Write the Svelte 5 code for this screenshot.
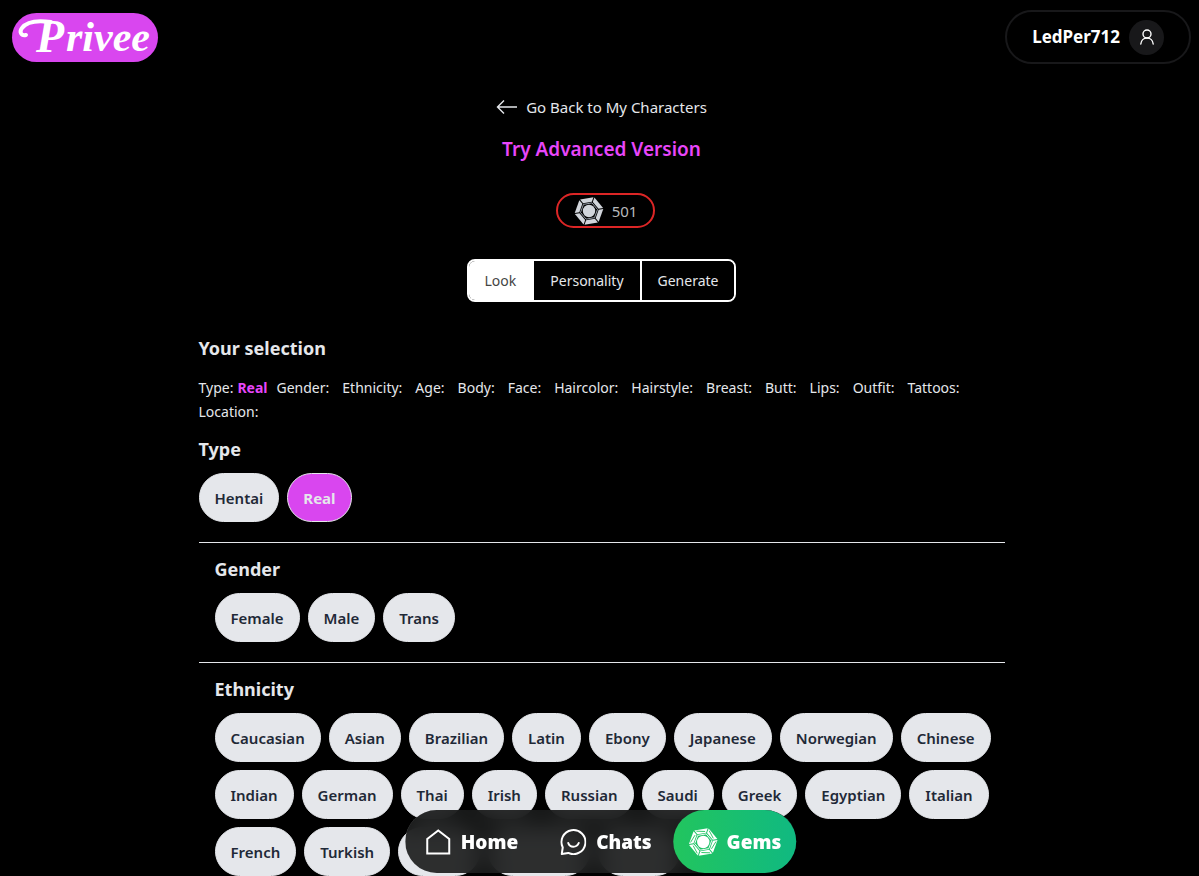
<script>
  const summary = [
    { label: 'Type', value: 'Real' },
    ...['Gender', 'Ethnicity', 'Age', 'Body', 'Face', 'Haircolor', 'Hairstyle', 'Breast', 'Butt', 'Lips', 'Outfit', 'Tattoos', 'Location'].map((label) => ({ label, value: '' }))
  ];
  const tabs = ['Look', 'Personality', 'Generate'];
  const sections = [
    { title: 'Type', options: ['Hentai', 'Real'] },
    { title: 'Gender', options: ['Female', 'Male', 'Trans'] },
    {
      title: 'Ethnicity',
      options: ['Caucasian', 'Asian', 'Brazilian', 'Latin', 'Ebony', 'Japanese', 'Norwegian', 'Chinese', 'Indian', 'German', 'Thai', 'Irish', 'Russian', 'Saudi', 'Greek', 'Egyptian', 'Italian', 'French', 'Turkish'],
      pending: [82, 102, 82]
    }
  ];
  let tab = $state('Look');
  let picked = $state({ Type: 'Real' });

  // Gem geometry: six facets around a hexagonal table
  const at = (deg, r) => {
    const a = (deg * Math.PI) / 180;
    return `${(16 + r * Math.cos(a)).toFixed(2)},${(16 + r * Math.sin(a)).toFixed(2)}`;
  };
  const angles = [-70, -10, 50, 110, 170, 230];
  const facets = angles.map((a) => [at(a + 2, 15.4), at(a + 58, 15.4), at(a + 57, 10.4), at(a + 3, 10.4)].join(' '));
  const cuts = angles.map((a) => `M${at(a + 8, 13.6)}L${at(a + 50, 11.4)}`).join('');
  const table = angles.map((a) => at(a, 9.2)).join(' ');
</script>

{#snippet gem(cls)}
  <svg class="gem {cls}" viewBox="0 0 32 32" aria-hidden="true">
    {#each facets as points}
      <polygon {points} />
    {/each}
    <path class="cuts" d={cuts} />
    <polygon class="table" points={table} />
    <circle cx="16" cy="16" r="6.6" />
  </svg>
{/snippet}

<header>
  <a class="logo" href="#home" aria-label="Privee">
    <svg viewBox="0 0 146 49">
      <path d="M14 22C9 23 7 19 10 15C15 8 25 7 39 9" fill="none" stroke="#fff" stroke-width="4" stroke-linecap="round" />
      <text class="cap" x="24" y="39">P</text>
      <text x="54" y="38">rivee</text>
    </svg>
  </a>
  <button class="user">
    LedPer712
    <span class="avatar">
      <svg viewBox="0 0 16 16" fill="none" stroke="#fff" stroke-width="1.4" stroke-linecap="round">
        <circle cx="8" cy="5" r="4" />
        <path d="M1.8 15c.3-3.500 2.800-6 6.200-6s5.900 2.500 6.200 6" />
      </svg>
    </span>
  </button>
</header>

<main>
  <div class="top">
    <a class="back" href="#characters">
      <svg viewBox="0 0 22 16" fill="none" stroke="currentColor" stroke-width="1.4"><path d="M21 8H1.500M8 1.500 1.500 8 8 14.500" /></svg>
      Go Back to My Characters
    </a>
    <a class="advanced" href="#advanced">Try Advanced Version</a>
    <div class="balance">{@render gem('muted')}<span>501</span></div>
    <div class="tabs">
      {#each tabs as t}
        <button class:active={tab === t} onclick={() => (tab = t)}>{t}</button>
      {/each}
    </div>
  </div>

  <h2>Your selection</h2>
  <div class="summary">
    {#each summary as s}
      <span class="item"><span>{s.label}:</span><b>{s.value}</b></span>
    {/each}
  </div>

  {#each sections as s, i}
    <section class:nested={i > 0}>
      <h2>{s.title}</h2>
      <div class="chips">
        {#each s.options as o}
          <button class="chip" class:on={picked[s.title] === o} onclick={() => (picked[s.title] = o)}>{o}</button>
        {/each}
        {#each s.pending ?? [] as width}
          <span class="chip" style="width: {width}px"></span>
        {/each}
      </div>
    </section>
  {/each}
</main>

<nav>
  <a href="#home">
    <svg viewBox="0 0 26 26" fill="none" stroke="#fff" stroke-width="2"><path d="M2 24.500V10L13 1.500 24 10v14.500z" /></svg>
    Home
  </a>
  <a class="chats" href="#chats">
    <svg viewBox="0 0 26 26" fill="none" stroke="#fff" stroke-width="2" stroke-linecap="round" stroke-linejoin="round"><path d="M2.500 18.500A12 12 0 1 1 8 23.900L1.500 25z" /><path d="M8 14c1.500 5 8.500 5 10.500 0" /></svg>
    Chats
  </a>
  <a class="gems" href="#gems">{@render gem('bright')}Gems</a>
</nav>

<style>
  :global(html) { background: #000; scrollbar-width: none; }
  :global(body) { margin: 0; background: #000; color: #e5e7eb; font: 15px/24px 'Noto Sans', 'Open Sans', sans-serif; }
  a { color: inherit; text-decoration: none; }
  button { font: inherit; color: inherit; cursor: pointer; margin: 0; }
  svg { display: block; flex: none; }

  header { display: flex; justify-content: space-between; align-items: center; padding: 10px 8px 0 12px; }
  .logo { border-radius: 25px; background: #d946ef; }
  .logo svg { width: 146px; height: 49px; overflow: visible; }
  .logo text { font: italic bold 42px 'Liberation Serif', serif; fill: #fff; }
  .logo .cap { font-size: 46px; }
  .user { display: flex; align-items: center; gap: 9px; box-sizing: border-box; height: 54px; padding: 0 25px; border: 2px solid #18181a; border-radius: 27px; background: #000; color: #fff; font-size: 17px; font-weight: 700; }
  .avatar { display: grid; place-items: center; width: 35px; height: 35px; border-radius: 50%; background: #18181a; }
  .avatar svg { width: 16px; height: 16px; }

  main { max-width: 806px; margin: 0 auto; padding: 31px 0 0 4px; }
  .top { display: flex; flex-direction: column; align-items: center; }
  .back { display: flex; align-items: center; gap: 8px; }
  .back svg { width: 22px; height: 16px; }
  .advanced { margin-top: 16px; color: #e846fa; font-size: 19px; line-height: 28px; font-weight: 600; }
  .balance { display: flex; align-items: center; gap: 8px; box-sizing: border-box; height: 35px; margin: 30px 0 31px 8px; padding: 0 16px; border: 2px solid #dc2626; border-radius: 18px; color: #b8babd; }
  .gem { width: 30px; height: 30px; }
  .muted { fill: #d1d5db; }
  .table { fill: none; stroke-width: 1; }
  .muted .table { stroke: #9ca3af; }
  .muted .cuts { display: none; }
  .bright { fill: #fff; }
  .bright .table { stroke: #fff; }
  .bright .cuts { stroke: #22c55e; stroke-width: 1; }
  .tabs { display: flex; box-sizing: border-box; height: 43px; border: 2px solid #fff; border-radius: 8px; overflow: hidden; font-size: 14px; }
  .tabs button { padding: 0 16px; border: 0; background: #000; }
  .tabs button + button { border-left: 2px solid #fff; }
  .tabs .active { background: #fff; color: #444; }

  h2 { margin: 0; font-size: 18px; line-height: 28px; font-weight: 700; }
  .top + h2 { margin-top: 32px; }
  .summary { display: flex; flex-wrap: wrap; column-gap: 9px; margin: 14px 0 11px; font-size: 14px; }
  .item { display: flex; gap: 4px; }
  .item b { color: #e846fa; font-weight: 700; }
  section { padding-bottom: 20px; }
  .nested { padding: 12px 0 20px 16px; border-top: 1px solid #e5e7eb; }
  .chips { display: flex; flex-wrap: wrap; gap: 8px; margin-top: 10px; }
  .chip { box-sizing: border-box; height: 49px; padding: 0 15px; border: 1px solid #e5e7eb; border-radius: 25px; background: #e5e7eb; color: #1f2937; font-weight: 600; }
  .chip.on { background: #d946ef; color: #e5e7eb; font-weight: 700; }

  nav { position: fixed; bottom: 3px; left: 50%; transform: translateX(-50%); display: flex; margin-left: 1px; height: 63px; border-radius: 32px; background: rgba(24, 25, 26, .9); backdrop-filter: blur(10px); color: #fff; font-size: 19px; font-weight: 900; }
  nav a { display: flex; align-items: center; gap: 10px; padding: 0 20px; }
  nav .chats { padding: 0 22px; }
  nav svg { width: 26px; height: 26px; }
  nav .gems { padding: 0 15px; gap: 8px; border-radius: 32px; background: linear-gradient(90deg, #22c55e, #10b981); }
  nav .gem { width: 30px; height: 30px; }
</style>
